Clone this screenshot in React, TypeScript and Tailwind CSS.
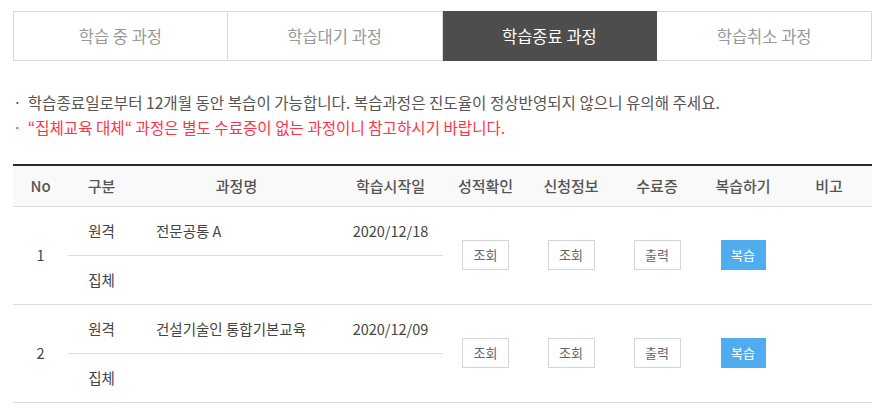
import React from 'react';

const tabs = ['학습 중 과정', '학습대기 과정', '학습종료 과정', '학습취소 과정'];

const rows = [
    { no: 1, name: '전문공통 A', date: '2020/12/18' },
    { no: 2, name: '건설기술인 통합기본교육', date: '2020/12/09' },
];

const OutlineButton: React.FC<{ label: string }> = ({ label }) => (
    <button className="w-[47px] h-[30px] border border-[#d5d5d5] bg-white text-[13px] text-[#666]">
        {label}
    </button>
);

const App: React.FC = () => {
    return (
        <div
            className="w-[890px] h-[416px] bg-white overflow-hidden"
            style={{ fontFamily: '"Noto Sans CJK KR", "Noto Sans", sans-serif' }}
        >
            <div className="ml-[13px] w-[859px] pt-[11px]">
                {/* tabs */}
                <div className="grid grid-cols-4 h-[50px]">
                    {tabs.map((t, i) => {
                        const active = i === 2;
                        return (
                            <div
                                key={t}
                                className={`flex items-center justify-center text-[16.5px] border-y ${i === 0 ? 'border-l' : ''} border-r ${
                                    active
                                        ? 'bg-[#4d4d4d] border-[#4d4d4d] text-white'
                                        : 'bg-white border-[#d9d9d9] text-[#999]'
                                }`}
                            >
                                {t}
                            </div>
                        );
                    })}
                </div>

                {/* notices */}
                <div className="mt-[29px] text-[15.6px] leading-[25px]">
                    <p className="text-[#555]">
                        <span className="mr-[6px]">·</span>학습종료일로부터 12개월 동안 복습이 가능합니다. 복습과정은 진도율이 정상반영되지 않으니 유의해 주세요.
                    </p>
                    <p className="text-[#ff3347]">
                        <span className="mr-[6px]">·</span>“집체교육 대체“ 과정은 별도 수료증이 없는 과정이니 참고하시기 바랍니다.
                    </p>
                </div>

                {/* table */}
                <table className="mt-[24px] w-full table-fixed border-collapse text-[14.5px] text-[#444]">
                    <colgroup>
                        <col className="w-[55px]" />
                        <col className="w-[67px]" />
                        <col className="w-[203px]" />
                        <col className="w-[105px]" />
                        <col className="w-[85px]" />
                        <col className="w-[86px]" />
                        <col className="w-[86px]" />
                        <col className="w-[86px]" />
                        <col className="w-[86px]" />
                    </colgroup>
                    <thead>
                        <tr className="h-[41px] bg-[#f9f9f9] border-t-2 border-t-[#2b2b2b] border-b border-b-[#dddddd] text-[15px] text-[#555]">
                            <th className="font-medium">No</th>
                            <th className="font-medium">구분</th>
                            <th className="font-medium">과정명</th>
                            <th className="font-medium">학습시작일</th>
                            <th className="font-medium">성적확인</th>
                            <th className="font-medium">신청정보</th>
                            <th className="font-medium">수료증</th>
                            <th className="font-medium">복습하기</th>
                            <th className="font-medium">비고</th>
                        </tr>
                    </thead>
                    <tbody>
                        {rows.map((r) => (
                            <React.Fragment key={r.no}>
                                <tr className="h-[49px]">
                                    <td rowSpan={2} className="text-center border-b border-[#dddddd]">{r.no}</td>
                                    <td className="text-center border-b border-[#dddddd]">원격</td>
                                    <td className="pl-[21px] border-b border-[#dddddd]">{r.name}</td>
                                    <td className="text-center border-b border-[#dddddd]">{r.date}</td>
                                    <td rowSpan={2} className="text-center border-b border-[#dddddd]">
                                        <OutlineButton label="조회" />
                                    </td>
                                    <td rowSpan={2} className="text-center border-b border-[#dddddd]">
                                        <OutlineButton label="조회" />
                                    </td>
                                    <td rowSpan={2} className="text-center border-b border-[#dddddd]">
                                        <OutlineButton label="출력" />
                                    </td>
                                    <td rowSpan={2} className="text-center border-b border-[#dddddd]">
                                        <button className="w-[45px] h-[30px] bg-[#4fadef] text-[13px] text-white">복습</button>
                                    </td>
                                    <td rowSpan={2} className="border-b border-[#dddddd]"></td>
                                </tr>
                                <tr className="h-[49px]">
                                    <td className="text-center border-b border-[#dddddd]">집체</td>
                                    <td className="border-b border-[#dddddd]"></td>
                                    <td className="border-b border-[#dddddd]"></td>
                                </tr>
                            </React.Fragment>
                        ))}
                    </tbody>
                </table>
            </div>
        </div>
    );
};

export default App;
